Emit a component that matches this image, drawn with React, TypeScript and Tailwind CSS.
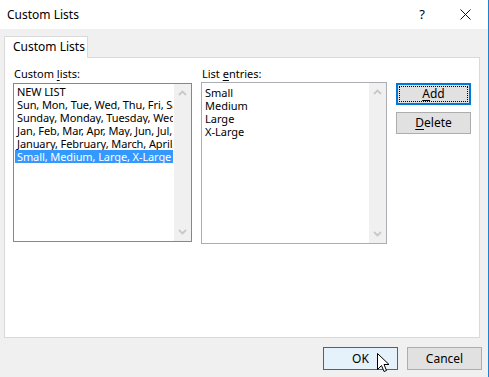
const customLists = [
  "NEW LIST",
  "Sun, Mon, Tue, Wed, Thu, Fri, Sat",
  "Sunday, Monday, Tuesday, Wednesday, Thursday, Friday, Saturday",
  "Jan, Feb, Mar, Apr, May, Jun, Jul, Aug, Sep, Oct, Nov, Dec",
  "January, February, March, April, May, June, July",
  "Small, Medium, Large, X-Large",
];

const entries = ["Small", "Medium", "Large", "X-Large"];

function Chevron({ down }: { down?: boolean }) {
  return (
    <svg width="9" height="6" viewBox="0 0 9 6" className="block">
      <polyline
        points={down ? "1,1 4.5,4.5 8,1" : "1,5 4.5,1.5 8,5"}
        fill="none"
        stroke="#c8c8c8"
        strokeWidth="1.8"
      />
    </svg>
  );
}

function ScrollTrack() {
  return (
    <div className="w-[17px] bg-[#f0f0f0] flex flex-col items-center justify-between py-[6px]">
      <Chevron />
      <Chevron down />
    </div>
  );
}

function Cursor() {
  return (
    <svg
      width="13"
      height="20"
      viewBox="0 0 13 20"
      className="absolute left-[377px] top-[353px] pointer-events-none"
    >
      <path
        d="M0.5 0.5 L0.5 16.5 L4.5 12.5 L7 18.5 L9.5 17.5 L7 11.5 L12 11.5 Z"
        fill="white"
        stroke="black"
        strokeWidth="1"
      />
    </svg>
  );
}

export default function App() {
  return (
    <div
      className="relative w-[489px] h-[377px] flex flex-col border-r border-[#1883d7] bg-[#f0f0f0] text-[11px] text-black"
      style={{ fontFamily: '"Noto Sans", "Open Sans", sans-serif' }}
    >
      {/* title bar */}
      <div className="h-[29px] bg-white flex items-center">
        <span className="pl-[7px] flex-1 text-[12px]">Custom Lists</span>
        <span className="w-[10px] text-[13px] text-center">?</span>
        <div className="w-[61px] flex justify-end pr-[17px]">
          <svg width="11" height="11" viewBox="0 0 11 11">
            <path d="M0.5 0.5 L10.5 10.5 M10.5 0.5 L0.5 10.5" stroke="#111" strokeWidth="1" />
          </svg>
        </div>
      </div>

      {/* tab */}
      <div className="pt-[7px] pl-[4px] flex">
        <div className="relative z-10 -mb-px w-[84px] h-[22px] bg-white border border-b-0 border-[#d9d9d9] pl-[8px] leading-[20px] text-[12px]">
          Custom Lists
        </div>
      </div>

      {/* tab panel */}
      <div className="ml-[4px] w-[476px] h-[281px] bg-white border border-[#d9d9d9] pl-[8px] pt-[8px] flex gap-[9px]">
        <div className="w-[179px] flex flex-col">
          <div className="h-[16px] leading-[16px] mb-px pl-px">
            Custom <u className="underline-offset-2">l</u>ists:
          </div>
          <div className="h-[159px] border border-[#828790] flex">
            <div className="flex-1 min-w-0 p-px overflow-hidden tracking-[-0.1px]">
              {customLists.map((item, i) => (
                <div
                  key={item}
                  className={`h-[13px] leading-[13px] pl-[2px] whitespace-nowrap overflow-hidden ${
                    i === customLists.length - 1 ? "bg-[#3399ff] text-white" : ""
                  }`}
                >
                  {item}
                </div>
              ))}
            </div>
            <ScrollTrack />
          </div>
        </div>

        <div className="w-[186px] flex flex-col">
          <div className="h-[16px] leading-[15px] pl-px">
            List <u className="underline-offset-2">e</u>ntries:
          </div>
          <div className="h-[162px] border border-[#abadb3] flex">
            <div className="flex-1 min-w-0 pt-[3px] pl-[3px]">
              {entries.map((e) => (
                <div key={e} className="h-[13px] leading-[13px]">
                  {e}
                </div>
              ))}
            </div>
            <ScrollTrack />
          </div>
        </div>

        <div className="w-[75px] pt-[17px] flex flex-col gap-[7px]">
          <button className="h-[22px] bg-[#e1e1e1] border-2 border-[#0078d7] outline-1 outline-dotted outline-black outline-offset-[-4px] text-[12px]">
            <u className="underline-offset-2">A</u>dd
          </button>
          <button className="h-[22px] bg-[#e1e1e1] border border-[#adadad] text-[12px]">
            <u className="underline-offset-2">D</u>elete
          </button>
        </div>
      </div>

      {/* footer buttons */}
      <div className="flex justify-end gap-[9px] pt-[9px] pr-[6px]">
        <button className="w-[75px] h-[23px] bg-[#e5f1fb] border border-[#0078d7] text-[12px]">OK</button>
        <button className="w-[75px] h-[23px] bg-[#e1e1e1] border border-[#adadad] text-[12px]">Cancel</button>
      </div>

      <Cursor />
    </div>
  );
}
